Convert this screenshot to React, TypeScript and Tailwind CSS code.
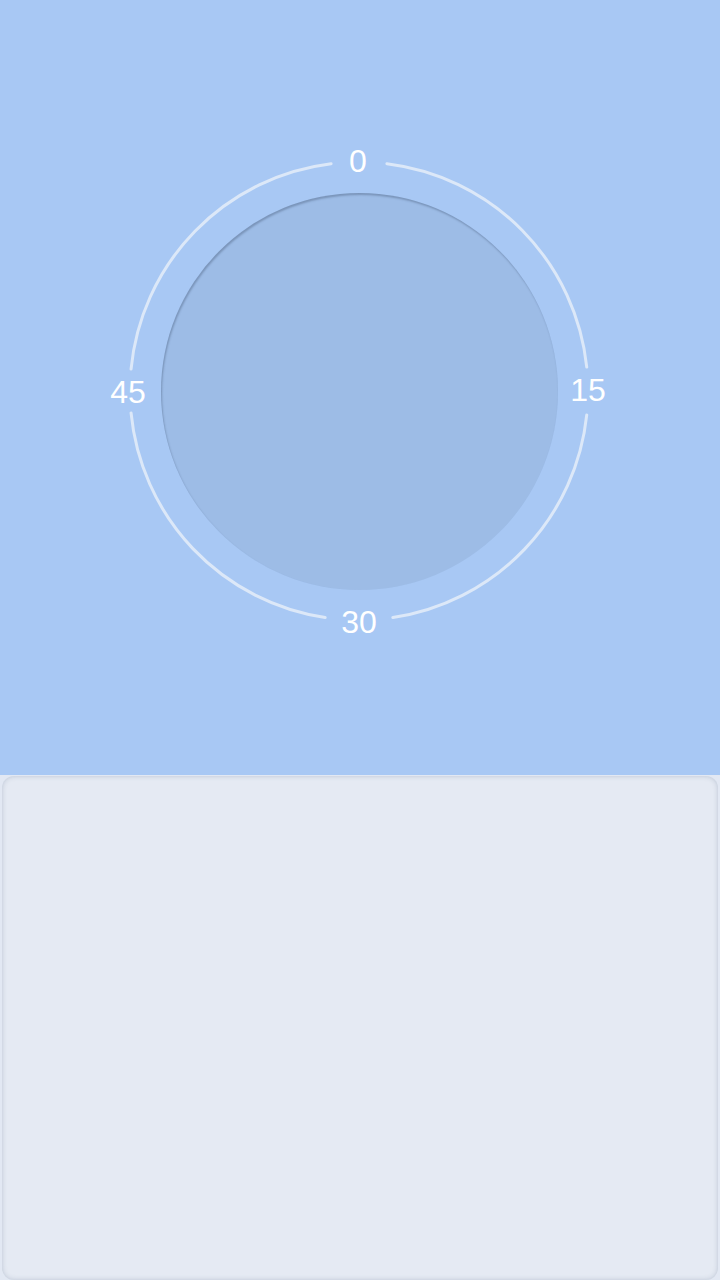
import React from "react";

const R = 229;
const C = 250;

// gaps (degrees, clockwise from top) around each label
const arcs: [number, number][] = [
  [7, 84],
  [96, 171.5],
  [188.5, 264.5],
  [275.5, 353],
];

const pt = (deg: number) => {
  const a = (deg * Math.PI) / 180;
  return [C + R * Math.sin(a), C - R * Math.cos(a)];
};

const arcPath = (from: number, to: number) => {
  const [x1, y1] = pt(from);
  const [x2, y2] = pt(to);
  return `M ${x1} ${y1} A ${R} ${R} 0 0 1 ${x2} ${y2}`;
};

const Dial = () => (
  <div className="relative w-[500px] h-[500px] grid place-items-center">
    <svg width="500" height="500" viewBox="0 0 500 500" className="absolute inset-0">
      {arcs.map(([a, b], i) => (
        <path
          key={i}
          d={arcPath(a, b)}
          fill="none"
          stroke="#dce8f8"
          strokeWidth="3"
          strokeLinecap="round"
        />
      ))}
    </svg>

    {/* face */}
    <div className="w-[397px] h-[397px] rounded-full bg-[#9dbce6] shadow-[inset_1px_2px_2px_rgba(70,90,120,0.4)]" />

    {/* labels */}
    <span className="absolute left-[249px] top-[20px] -translate-x-1/2 -translate-y-1/2 text-white text-[32px] leading-none">
      0
    </span>
    <span className="absolute left-[479px] top-[249px] -translate-x-1/2 -translate-y-1/2 text-white text-[32px] leading-none">
      15
    </span>
    <span className="absolute left-[250px] top-[481px] -translate-x-1/2 -translate-y-1/2 text-white text-[32px] leading-none">
      30
    </span>
    <span className="absolute left-[19px] top-[251px] -translate-x-1/2 -translate-y-1/2 text-white text-[32px] leading-none">
      45
    </span>
  </div>
);

export default function App() {
  return (
    <div
      className="w-[720px] h-[1280px] flex flex-col bg-[#a8c8f4]"
      style={{ fontFamily: '"Liberation Sans", Arial, sans-serif' }}
    >
      <div className="h-[775px] flex justify-center pt-[141px] pr-[2px]">
        <Dial />
      </div>
      <div className="flex-1 bg-[#e2e8f3] pt-[1px]">
        <div className="h-full mx-[2px] mb-[2px] rounded-[12px] bg-[#e5eaf3] shadow-[inset_0_0_5px_rgba(90,110,140,0.3)]" />
      </div>
    </div>
  );
}
